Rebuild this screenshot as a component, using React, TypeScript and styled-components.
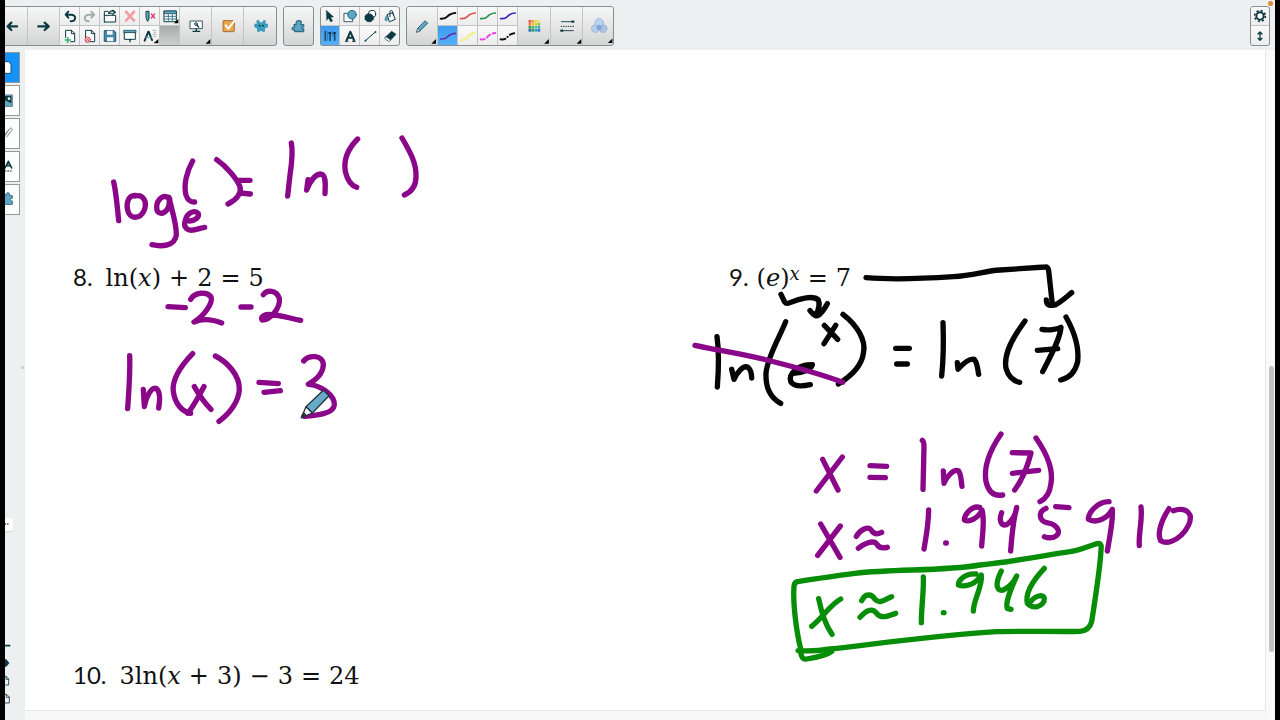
import React from "react";
import styled, { createGlobalStyle, css } from "styled-components";

const TEAL = "#0b3a42";
const BLUE = "#5fa6c4";
const PURPLE = "#8a078a";
const GREEN = "#078d07";

const GlobalStyle = createGlobalStyle`
  * { box-sizing: border-box; }
  body { margin: 0; background: #000; }
  button { appearance: none; border: 0; margin: 0; padding: 0; background: none; font: inherit; color: inherit; }
`;

const Frame = styled.div`
  display: flex;
  flex-direction: column;
  min-height: 100vh;
  border: solid #000;
  border-width: 0 5px;
  background: #edf0f0;
  overflow: hidden;
`;

const Toolbar = styled.header`
  position: relative;
  display: flex;
  gap: 6px;
  height: 50px;
  padding: 6px 5px 4px 0;
  background: #edf0f0;
`;

const Group = styled.div<{ $cut?: boolean; $end?: boolean }>`
  position: relative;
  display: flex;
  flex: none;
  flex-direction: ${(p) => (p.$end ? "column" : "row")};
  height: 40px;
  margin-left: ${(p) => (p.$end ? "auto" : "0")};
  border-radius: ${(p) => (p.$cut ? "0 3px 3px 0" : "3px")};
  background: linear-gradient(#f7f8f8, #e6e6e6 50%, #d2d3d3);
  overflow: hidden;
  &::after {
    content: "";
    position: absolute;
    inset: 0;
    border: 1px solid #8b8d8d;
    border-left-width: ${(p) => (p.$cut ? "0" : "1px")};
    border-radius: inherit;
    pointer-events: none;
  }
`;

const SmallGrid = styled.div<{ $cols: number }>`
  display: grid;
  grid-template-columns: repeat(${(p) => p.$cols}, 20px);
  grid-template-rows: 20px 20px;
`;

const small = css`
  width: 20px;
  height: 20px;
  background: linear-gradient(#fafafa, #ececec);
  box-shadow: inset -1px -1px #c3c5c5;
`;

const SmallButton = styled.button<{ $active?: boolean; $empty?: boolean }>`
  ${small}
  ${(p) => p.$active && "background: linear-gradient(#3d9bf0, #55b2fb);"}
  ${(p) => p.$empty && "background: linear-gradient(#a9abab, #cfd0d0);"}
`;

const LargeButton = styled.button<{ $w?: number }>`
  width: ${(p) => p.$w ?? 32}px;
  height: 40px;
  flex: none;
  box-shadow: inset -1px 0 #c3c5c5;
`;

const Drawing = styled.svg`
  display: block;
  width: 100%;
  height: 100%;
  fill: none;
  stroke-linecap: round;
  stroke-linejoin: round;
`;

const RecordDot = styled.i`
  position: absolute;
  top: 1px;
  right: 2px;
  width: 5px;
  height: 5px;
  border-radius: 50%;
  background: #d98a35;
`;

const Body = styled.div`
  display: flex;
  flex: 1;
`;

const Sidebar = styled.nav`
  display: flex;
  flex: none;
  flex-direction: column;
  width: 20px;
  padding-top: 2px;
`;

const Tab = styled.button<{ $active?: boolean }>`
  width: 15px;
  height: 31px;
  margin-bottom: 2px;
  background: ${(p) => (p.$active ? "#1492f8" : "#fcfdfd")};
  box-shadow: inset -1px 0 #96999a, inset 0 1px #96999a, inset 0 -1px #96999a;
`;

const Handle = styled.div`
  display: flex;
  flex: 1;
  align-items: center;
  justify-content: flex-end;
  &::after {
    content: "";
    width: 3px;
    height: 3px;
    margin-right: 1px;
    border-radius: 50%;
    background: #c6caca;
  }
`;

const MoreTab = styled.button`
  width: 8px;
  height: 13px;
  border-radius: 0 3px 3px 0;
  background: #fff;
  box-shadow: 0 1px 1px #d0d4d4;
`;

const SideTools = styled.div`
  display: flex;
  flex-direction: column;
  margin: 105px 0 12px;
`;

const SideTool = styled.button`
  width: 7px;
  height: 18px;
`;

const PaperColumn = styled.main`
  flex: 1;
  min-width: 0;
  display: flex;
  flex-direction: column;
  padding-bottom: 9px;
  background: #f8f8f8;
`;

const Paper = styled.article`
  position: relative;
  flex: 1;
  background: #fff;
  border: solid #e6e7e7;
  border-width: 0 1px 1px 0;
  padding: 207px 48px 0;
`;

const Problems = styled.div`
  display: grid;
  grid-template-columns: 656px 1fr;
  row-gap: 358px;
`;

const Problem = styled.p`
  display: flex;
  align-items: baseline;
  margin: 0;
  height: 40px;
  line-height: 40px;
  white-space: nowrap;
  color: #111;
  font-family: "DejaVu Serif", serif;
  font-size: 24px;
`;

const Number = styled.span<{ $gap: number }>`
  font-family: Lato, sans-serif;
  font-size: 24px;
  margin-right: ${(p) => p.$gap}px;
`;

const Op = styled.span`
  margin: 0 8px;
`;

const Power = styled.sup`
  align-self: flex-start;
  padding-top: 8px;
  font-size: 18px;
  line-height: 18px;
`;

const InkLayer = styled.svg`
  position: absolute;
  left: 0;
  top: 0;
  width: 1240px;
  height: 660px;
  fill: none;
  stroke-width: 16;
  stroke-linecap: round;
  stroke-linejoin: round;
  pointer-events: none;
`;

const ScrollStrip = styled.div`
  display: flex;
  flex: none;
  flex-direction: column;
  align-items: center;
  width: 9px;
  background: #f9f9f9;
  &::before { content: ""; flex: 316; }
  &::after { content: ""; flex: 68; }
`;

const Thumb = styled.div`
  flex: 286;
  width: 5px;
  margin-left: 2px;
  border-radius: 3px;
  background: #c0c1c1;
`;

type IconProps = { box: string; children?: React.ReactNode };
const Icon = ({ box, children }: IconProps) => (
  <Drawing viewBox={box} aria-hidden="true">{children}</Drawing>
);

type ToolProps = { label: string; box: string; active?: boolean; w?: number; children?: React.ReactNode };
const Small = ({ label, box, active, children }: ToolProps) => (
  <SmallButton aria-label={label} $active={active}><Icon box={box}>{children}</Icon></SmallButton>
);
const Large = ({ label, box, w, children }: ToolProps) => (
  <LargeButton aria-label={label} $w={w}><Icon box={box}>{children}</Icon></LargeButton>
);

const Puzzle = () => (
  <path
    d="M882 74 H889 C884 60 905 57 905 67 L902 74 H912 V81 C904 79 903 88 912 87 V95 H884 V90 C874 92 873 80 884 82 Z"
    fill={BLUE} stroke="#2f6f88" strokeWidth="4"
  />
);

const ink = { strokeWidth: 6 };

const MainTools = () => (
  <Group $cut>
    <Large label="Previous page" box="15 18 69 120" w={23}>
      <path d="M51 79 H25 M34 68 L23 79 L34 90" stroke={TEAL} strokeWidth="7" />
    </Large>
    <Large label="Next page" box="84 18 96 120">
      <path d="M115 79 H143 M134 68 L146 79 L134 90" stroke={TEAL} strokeWidth="7" />
    </Large>
    <SmallGrid $cols={6}>
      <Small label="Undo" box="180 18 60 60">
        <path d="M205 35 L197 44 L205 53 M199 44 H212 C232 44 228 64 212 64" stroke={TEAL} strokeWidth="6" />
      </Small>
      <Small label="Redo" box="240 18 60 60">
        <path d="M274 35 L283 44 L274 53 M281 44 H268 C248 44 252 64 266 64" stroke="#a3adac" strokeWidth="6" />
      </Small>
      <Small label="Open" box="300 18 60 60">
        <path d="M313 66 V34 H324 L328 40 H336 M313 66 H347 V46 H313" stroke={TEAL} strokeWidth="3" fill="#fff" />
        <path d="M326 40 C332 30 338 32 344 36 M338 31 L346 37 L338 43" stroke={TEAL} strokeWidth="4" />
      </Small>
      <Small label="Delete" box="360 18 60 60">
        <path d="M376 33 L404 64 M404 33 L376 64" stroke="#f0a0a8" strokeWidth="8" strokeLinecap="butt" />
      </Small>
      <Small label="Clear ink" box="420 18 60 60">
        <path d="M439 34 H447 V56 L443 64 L439 56 Z" fill={BLUE} stroke={TEAL} strokeWidth="3" />
        <path d="M454 42 L464 54 M464 42 L454 54" stroke="#dc4468" strokeWidth="4" />
      </Small>
      <Small label="Table" box="480 18 60 60">
        <path d="M493 33 H529 V65 H493 Z" fill="#fff" stroke={TEAL} strokeWidth="3" />
        <path d="M493 33 H529 V41 H493 Z" fill={BLUE} stroke={TEAL} strokeWidth="2" />
        <path d="M493 49 H529 M493 57 H529 M505 41 V65 M517 41 V65" stroke="#3d7d90" strokeWidth="3" />
        <path d="M535 57 V70 H522 Z" fill="#000" />
      </Small>
      <Small label="Add page" box="180 78 60 60">
        <path d="M198 91 H215 L224 100 V125 H198 Z M214 91 V101 H224" fill="#fff" stroke={TEAL} strokeWidth="3" />
        <circle cx="203" cy="120" r="9" fill="#eafaf0" />
        <path d="M196 120 H211 M203 113 V127" stroke="#35b070" strokeWidth="5" />
      </Small>
      <Small label="Delete page" box="240 78 60 60">
        <path d="M258 91 H275 L284 100 V125 H258 Z M274 91 V101 H284" fill="#fff" stroke={TEAL} strokeWidth="3" />
        <circle cx="263" cy="119" r="8" fill="#fbdde0" stroke="#d84458" strokeWidth="3" />
        <path d="M260 116 L266 122 M266 116 L260 122" stroke="#d84458" strokeWidth="3" />
      </Small>
      <Small label="Save" box="300 78 60 60">
        <path d="M314 92 H342 L347 97 V124 H314 Z" fill="#3f88a8" stroke="#1e5068" strokeWidth="3" />
        <path d="M321 92 H338 V104 H321 Z M321 124 V112 H340 V124 Z" fill="#eef6f8" />
      </Small>
      <Small label="Screen shade" box="360 78 60 60">
        <path d="M374 97 H406 V118 H374 Z" fill="#fff" stroke={TEAL} strokeWidth="3" />
        <path d="M372 91 H408 V98 H372 Z" fill={BLUE} stroke={TEAL} strokeWidth="2" />
        <path d="M390 118 V125" stroke={TEAL} strokeWidth="4" />
      </Small>
      <Small label="Measurement tools" box="420 78 60 60">
        <path d="M445 95 L434 122 M446 95 L456 120" stroke={TEAL} strokeWidth="6" />
        <path d="M438 112 H454" stroke={BLUE} strokeWidth="3" />
        <path d="M459 91 H467 M462 97 H467 M459 103 H467 M462 109 H467" stroke="#899" strokeWidth="2" />
        <path d="M475 117 V130 H461 Z" fill="#000" />
      </Small>
      <SmallButton aria-label="Empty slot" $empty />
    </SmallGrid>
    <Large label="View screens" box="540 18 96 120">
      <path d="M571 63 H607 V86 H571 Z" fill="#fff" stroke="#3b5960" strokeWidth="3" />
      <circle cx="588" cy="72" r="4" stroke={TEAL} strokeWidth="3" />
      <path d="M591 76 L596 81 M589 87 V93 M579 94 H599" stroke={TEAL} strokeWidth="4" />
      <path d="M631 117 V131 H617 Z" fill="#000" />
    </Large>
    <Large label="Response tools" box="636 18 96 120">
      <rect x="669" y="62" width="34" height="33" rx="3" fill="#eda64a" stroke="#a07033" strokeWidth="3" />
      <path d="M677 76 L685 86 L703 63" stroke="#fff" strokeWidth="6" />
    </Large>
    <Large label="Activity monsters" box="732 18 96 120" w={33}>
      <path
        d="M769 63 L774 61 L778 68 H786 L790 61 L795 63 L793 72 L801 72 V81 L792 85 V94 H785 L782 89 L778 94 H771 V85 L763 81 V72 L771 72 Z"
        fill="#39a2c4" stroke="#2b86a8" strokeWidth="2"
      />
      <path d="M777 77 h1 M787 77 h1" stroke={TEAL} strokeWidth="5" />
    </Large>
  </Group>
);

const PuzzleTools = () => (
  <Group>
    <Large label="Add-ons" box="848 18 96 120" w={31}><Puzzle /></Large>
  </Group>
);

const DrawTools = () => (
  <Group>
    <SmallGrid $cols={4}>
      <Small label="Select" box="28 18 60 60">
        <path d="M47 31 L69 51 L60 52 L66 63 L60 66 L54 55 L48 61 Z" fill={TEAL} stroke={TEAL} strokeWidth="1" />
      </Small>
      <Small label="Shapes" box="88 18 60 60">
        <path d="M101 40 H126 V65 H101 Z" fill="#fff" stroke="#36616e" strokeWidth="3" />
        <circle cx="124" cy="44" r="13" fill={BLUE} stroke="#2b6c88" strokeWidth="3" />
      </Small>
      <Small label="Regular polygons" box="148 18 60 60">
        <circle cx="184" cy="42" r="11" fill="#fff" stroke={TEAL} strokeWidth="3" />
        <path d="M169 42 H181 L188 49 V58 L181 65 H170 L163 58 V49 Z" fill={TEAL} stroke={TEAL} strokeWidth="2" />
      </Small>
      <Small label="Fill" box="208 18 60 60">
        <path d="M231 43 L246 38 L254 58 L237 65 Z" fill="#fff" stroke={TEAL} strokeWidth="3" />
        <path d="M238 50 V35 C238 30 245 30 246 36 L248 45" stroke={TEAL} strokeWidth="3" />
        <path d="M228 47 C221 55 222 62 227 63 C232 61 230 54 228 47" fill={BLUE} stroke="#2b6c88" strokeWidth="2" />
      </Small>
      <Small label="Pens" box="28 78 60 60" active>
        <path d="M44 95 V121 M58 101 V121 M72 101 V121" stroke="#134b73" strokeWidth="5" />
        <path d="M51 95 V121 M65 94 V108" stroke="#245f8a" strokeWidth="2" />
        <path d="M56 99 H59 M70 99 H73" stroke="#0a3050" strokeWidth="6" />
      </Small>
      <Small label="Text" box="88 78 60 60">
        <path d="M107 123 L119 95 L131 123 M111 113 H127" stroke={TEAL} strokeWidth="6" strokeLinecap="butt" />
        <path d="M103 124 H113 M124 124 H135" stroke={TEAL} strokeWidth="3" strokeLinecap="butt" />
      </Small>
      <Small label="Line" box="148 78 60 60">
        <path d="M164 122 L194 96" stroke={TEAL} strokeWidth="3" />
        <path d="M164 122 h1 M194 96 h1" stroke={TEAL} strokeWidth="5" />
      </Small>
      <Small label="Eraser" box="208 78 60 60">
        <path d="M226 110 L243 94 L256 103 L240 120 Z" fill={TEAL} stroke={TEAL} strokeWidth="2" />
        <path d="M226 110 L240 120 L235 125 L223 116 Z" fill="#fff" stroke={TEAL} strokeWidth="2" />
      </Small>
    </SmallGrid>
  </Group>
);

const PenTools = () => (
  <Group>
    <Large label="Pen" box="286 18 96 120">
      <path d="M344 63 L351 70 L328 92 L318 96 L321 86 Z" fill={BLUE} stroke="#2c6076" strokeWidth="3" />
      <path d="M318 96 L321 86 L328 92 Z" fill="#fff" stroke="#2c4a56" strokeWidth="2" />
      <path d="M376 117 V131 H362 Z" fill="#000" />
    </Large>
    <SmallGrid $cols={4}>
      <Small label="Black pen" box="382 18 60 60"><path d="M390 56 C418 58 402 42 434 39" stroke="#111" {...ink} /></Small>
      <Small label="Red pen" box="442 18 60 60"><path d="M450 56 C478 58 462 42 494 39" stroke="#e04a4a" {...ink} strokeWidth="5" /></Small>
      <Small label="Green pen" box="502 18 60 60"><path d="M510 56 C538 58 522 42 554 39" stroke="#27924a" {...ink} strokeWidth="5" /></Small>
      <Small label="Blue pen" box="562 18 60 60"><path d="M570 56 C598 58 582 42 614 39" stroke="#3a20c0" {...ink} strokeWidth="5" /></Small>
      <Small label="Purple pen" box="382 78 60 60" active><path d="M390 117 C418 119 402 103 434 100" stroke="#6330a8" {...ink} strokeWidth="5" /></Small>
      <Small label="Yellow highlighter" box="442 78 60 60"><path d="M452 121 C476 121 464 103 492 98" stroke="#f0f08c" {...ink} strokeWidth="7" /></Small>
      <Small label="Magenta dashed pen" box="502 78 60 60"><path d="M510 118 C538 120 522 104 554 99" stroke="#ec3fe4" {...ink} strokeDasharray="12 9" /></Small>
      <Small label="Black dashed pen" box="562 78 60 60"><path d="M570 118 C598 120 582 104 614 99" stroke="#111" {...ink} strokeDasharray="14 9 1 9" /></Small>
    </SmallGrid>
    <Large label="Colour" box="622 18 96 120" w={33}>
      {[
        ["#e2574c", "#f0a03c", "#f6d24a", "#f3e36a"],
        ["#ee8a3a", "#f3c440", "#c6d84a", "#8ccb50"],
        ["#3d9a58", "#4fb860", "#56c0a0", "#45a8d0"],
        ["#3868b0", "#2a9a78", "#38a8c0", "#3070c0"],
      ].map((row, y) =>
        row.map((c, x) => <rect key={`${x}-${y}`} x={652 + x * 9} y={60 + y * 9} width="8" height="8" fill={c} />)
      )}
      <path d="M713 117 V131 H699 Z" fill="#000" />
    </Large>
    <Large label="Line style" box="718 18 96 120">
      <path d="M749 65 H778 M756 92 H785" stroke="#2c4a52" strokeWidth="3" />
      <path d="M749 79 H787" stroke="#2c4a52" strokeWidth="4" strokeDasharray="1 6" />
      <path d="M782 65 h3 M749 92 h3" stroke={TEAL} strokeWidth="7" />
      <path d="M809 117 V131 H795 Z" fill="#000" />
    </Large>
    <Large label="Transparency" box="814 18 96 120" w={31}>
      <g stroke="#8fa6c8" strokeWidth="2">
        <circle cx="852" cy="86" r="12" fill="#b9cdea" />
        <circle cx="876" cy="86" r="12" fill="#a9c2e6" />
        <circle cx="864" cy="68" r="13" fill="#bcd4f2" />
      </g>
      <circle cx="864" cy="82" r="8" fill="#7da4dc" />
      <path d="M905 117 V131 H891 Z" fill="#000" />
    </Large>
  </Group>
);

const SettingsTools = () => (
  <Group $end>
    <Small label="Settings" box="149 18 60 60">
      <circle cx="179" cy="48" r="11" fill="#fff" stroke={TEAL} strokeWidth="6" />
      <circle cx="179" cy="48" r="16" stroke={TEAL} strokeWidth="5" strokeDasharray="6 6.56" strokeLinecap="butt" />
    </Small>
    <Small label="Move toolbar" box="149 78 60 60">
      <path d="M179 98 V119 M173 102 L179 96 L185 102 M173 115 L179 121 L185 115" stroke={TEAL} strokeWidth="4" />
    </Small>
  </Group>
);

const SideTabs = () => (
  <Sidebar aria-label="Side panels">
    <Tab aria-label="Page sorter" $active>
      <Icon box="15 21 45 93"><path d="M8 50 H26 L33 58 V85 H8 Z" fill="#fff" stroke="#164e72" strokeWidth="3" /></Icon>
    </Tab>
    <Tab aria-label="Gallery">
      <Icon box="15 120 45 93">
        <path d="M5 150 H37 V184 H5 Z" fill={BLUE} stroke="#678" strokeWidth="3" />
        <path d="M5 153 H34 V175 L15 166 Z" fill={TEAL} />
        <circle cx="27" cy="161" r="4" fill="#fff" />
      </Icon>
    </Tab>
    <Tab aria-label="Attachments">
      <Icon box="15 219 45 93"><path d="M12 277 L28 252 C34 245 39 252 34 258 L20 276 M16 266 L27 254" stroke="#7c8587" strokeWidth="3" /></Icon>
    </Tab>
    <Tab aria-label="Text properties">
      <Icon box="15 318 45 93">
        <path d="M15 369 L25 349 L35 369 M19 362 H31" stroke={TEAL} strokeWidth="5" />
        <path d="M15 378 H38" stroke={TEAL} strokeWidth="3" strokeDasharray="3 5" />
      </Icon>
    </Tab>
    <Tab aria-label="Add-ons panel">
      <Icon box="15 417 45 93">
        <path d="M10 452 H18 C14 441 33 440 28 452 H37 V460 C29 458 29 469 37 468 V478 H10 Z" fill={BLUE} stroke="#2f6f88" strokeWidth="3" />
      </Icon>
    </Tab>
    <Handle />
    <MoreTab aria-label="More">
      <Icon box="15 54 24 39"><path d="M16 72 h1 M23 72 h1" stroke="#444" strokeWidth="4" /></Icon>
    </MoreTab>
    <SideTools>
      <SideTool aria-label="Add"><Icon box="15 408 21 54"><path d="M12 437 H29" stroke={TEAL} strokeWidth="5" /></Icon></SideTool>
      <SideTool aria-label="Next"><Icon box="15 464 21 54"><path d="M14 480 H19 L28 491 L19 502 H14 Z" fill={TEAL} /></Icon></SideTool>
      <SideTool aria-label="New page"><Icon box="15 518 21 54"><path d="M10 531 H19 L26 539 V557 H16 M18 531 V540 H26" stroke="#39585e" strokeWidth="3" /></Icon></SideTool>
      <SideTool aria-label="Copy page"><Icon box="15 572 21 54"><path d="M10 585 H20 L28 593 V611 H16 M19 585 V594 H28" stroke="#39585e" strokeWidth="3" /></Icon></SideTool>
    </SideTools>
  </Sidebar>
);

const Ink = () => (
  <InkLayer viewBox="0 0 1240 660" role="img" aria-label="Handwritten working for problems 8 and 9">
    {/* log e ( ) = ln ( ) */}
    <svg x="35" y="70" width="380" height="180" viewBox="0 0 1140 540" overflow="visible" stroke={PURPLE}>
      <path d="M161 186 C168 215 172 260 176 302" />
      <path d="M226 226 C205 225 198 250 203 270 C208 298 240 300 253 270 C262 245 250 222 226 228" />
      <path d="M329 237 C310 218 290 240 290 262 C290 285 310 284 322 268 C330 255 328 240 327 232 C335 270 350 310 349 345 C345 378 305 381 276 374" />
      <path d="M398 123 C380 155 370 195 378 225 C383 240 392 247 404 246" />
      <path d="M470 119 C500 140 530 175 540 200 C545 220 530 240 504 252 M538 181 H570 M541 219 L571 222" />
      <path d="M388 303 C405 302 418 292 415 281 C405 268 382 278 376 300 C368 325 385 333 400 330 C415 328 425 323 434 322" />
      <path d="M694 69 C700 100 695 130 690 165 L683 228" />
      <path d="M744 179 L740 210 C750 185 765 162 783 162 C799 165 796 195 795 221" />
      <path d="M893 57 C865 85 850 120 856 155 C862 180 875 197 890 202" />
      <path d="M1026 54 C1050 95 1070 130 1068 170 C1068 200 1055 215 1033 225" />
    </svg>
    {/* subtracting 2, then ln(x) = 3 */}
    <svg x="35" y="200" width="320" height="180" viewBox="0 0 960 540" overflow="visible" stroke={PURPLE}>
      <path d="M324 170 L376 173 M543 171 H573" />
      <path d="M392 148 C405 125 440 125 453 140 C460 160 430 200 402 216 C420 208 450 205 485 219" />
      <path d="M610 134 C620 118 650 120 658 145 C662 175 630 210 606 210 C600 200 615 190 640 195 C670 197 690 205 722 211" />
      <path d="M209 317 C211 370 206 430 203 476" />
      <path d="M250 418 L253 470 C258 440 275 408 290 416 C300 425 300 450 296 474" />
      <path d="M398 311 C365 345 335 385 340 425 C345 460 365 485 392 490" />
      <path d="M403 410 C420 440 440 465 453 478 M432 410 C415 440 400 470 383 490" />
      <path d="M466 318 C500 335 540 375 538 420 C535 455 510 490 477 514" />
      <path d="M597 397 L655 401 M612 427 L661 422" />
      <path d="M731 333 C745 315 790 312 790 345 C788 375 765 390 745 403 C780 405 825 435 823 465 C820 492 770 496 732 499" />
      <g stroke="#26343f" strokeWidth="4">
        <path d="M790 421 L807 437 L757 489 L738 470 Z" fill="#68abc8" />
        <path d="M738 470 L757 489 L724 503 Z" fill="#f4f8fa" />
        <path d="M731 488 L738 497 L724 503 Z" fill="#26343f" />
      </g>
    </svg>
    {/* taking ln of both sides */}
    <svg x="655" y="200" width="420" height="170" viewBox="0 0 1260 510" overflow="visible" stroke="#050505">
      <path d="M558 83 C640 90 760 84 820 80 C880 76 920 62 960 60 L1095 51 Q1104 50 1106 62 L1117 163" />
      <path d="M1099 150 C1100 168 1110 168 1125 165 C1145 155 1160 140 1175 128" />
      <path d="M303 133 L314 156 Q319 163 330 158 C360 145 400 135 415 150 C422 165 415 180 408 195 M390 182 C400 195 410 202 418 194 C430 183 436 172 442 161" />
      <path d="M111 260 C118 310 116 360 112 411" />
      <path d="M155 358 L162 388 C170 370 190 342 205 353 C215 362 214 372 215 384" />
      <path d="M317 215 C300 260 262 320 258 370 C256 420 275 445 302 460" />
      <path d="M340 370 C370 368 395 358 397 344 C380 342 345 350 332 378 C325 405 350 413 391 404" />
      <path d="M433 226 L473 268 M467 226 L432 281" />
      <path d="M489 193 C530 225 560 270 550 310 C545 350 510 380 475 402" />
      <path d="M647 295 H688 M650 342 H682" />
      <path d="M789 218 C791 270 790 330 785 378" />
      <path d="M832 338 L834 358 C850 340 870 325 883 328 C893 340 892 355 896 373" />
      <path d="M1035 213 C1000 260 970 310 978 355 C985 380 1000 393 1019 397" />
      <path d="M1086 238 C1105 242 1130 238 1143 232 C1140 270 1110 320 1088 365 M1072 301 L1133 296" />
      <path d="M1158 201 C1180 240 1198 290 1193 335 C1185 370 1165 385 1142 390" />
      <path d="M45 286 C120 302 190 312 260 330 C340 350 420 370 488 397" stroke={PURPLE} />
    </svg>
    {/* solution and rounded answer */}
    <svg x="755" y="370" width="430" height="250" viewBox="0 0 1290 750" overflow="visible" stroke={PURPLE}>
      <path d="M128 118 L174 210 M187 111 L109 213" />
      <path d="M270 137 L320 139 M270 172 L316 173" />
      <path d="M427 61 Q432 65 432 80 L429 208" />
      <path d="M490 153 L492 190 C500 170 520 147 535 152 C545 165 543 185 546 199" />
      <path d="M663 42 C630 90 610 140 618 185 C625 215 640 230 668 225" />
      <path d="M697 98 L753 99 C745 130 730 175 704 210 M697 160 L776 151" />
      <path d="M768 54 C800 100 820 150 813 190 C810 215 800 235 780 245" />
      <path d="M122 312 L180 412 M181 318 L113 406" />
      <path d="M229 349 C240 330 265 315 275 332 C283 345 295 342 305 337 M235 385 C250 372 280 358 290 372 C300 388 315 384 322 382" />
      <path d="M446 270 C445 320 438 350 432 387 M497 369 h2" />
      <path d="M599 262 C575 255 553 285 553 300 C567 308 595 295 606 270 C615 300 607 345 605 378" />
      <path d="M665 278 C655 305 665 318 680 314 C700 300 708 280 710 262 C700 300 695 350 692 393" />
      <path d="M798 265 C775 275 775 300 800 308 C840 315 845 345 820 352 Q805 355 793 350 M827 260 L867 263" />
      <path d="M987 245 C950 245 925 280 925 298 C945 310 980 300 997 268 C1000 300 990 345 982 393" />
      <path d="M1083 261 C1088 300 1075 340 1078 377" />
      <path d="M1167 266 C1145 300 1130 340 1142 362 C1180 385 1240 320 1230 285 C1223 268 1200 264 1180 272" />
      <g stroke={GREEN}>
        <path d="M62 686 C50 640 38 550 42 500 Q42 484 58 484 C110 475 180 466 225 460 C350 445 480 455 600 435 C700 425 800 405 870 395 C910 388 940 372 955 370 Q966 370 963 390 C960 450 945 540 935 605 Q928 632 900 634 C820 636 740 632 650 635 C480 645 300 670 150 687 C120 692 90 694 54 692" />
        <path d="M62 696 Q64 720 80 717 C110 712 140 706 155 694" />
        <path d="M116 536 C125 580 140 620 156 643 M182 537 C150 555 130 590 95 619" />
        <path d="M245 542 C255 520 275 520 285 538 C300 555 320 535 335 530 M240 592 C255 575 275 560 290 580 C305 600 330 585 347 580" />
        <path d="M430 471 C432 510 424 560 424 608 M490 578 h2" />
        <path d="M588 462 C555 460 535 480 535 495 C560 503 590 490 604 465 C608 500 580 540 580 573" />
        <path d="M664 453 C640 500 655 515 670 510 C690 500 700 490 710 468 C695 500 675 550 682 565 L693 568" />
        <path d="M793 445 C760 480 735 520 742 550 C755 570 795 560 793 535 C790 522 765 525 750 548" />
      </g>
    </svg>
  </InkLayer>
);

const Worksheet = () => (
  <PaperColumn>
    <Paper>
      <Problems>
        <Problem>
          <Number $gap={13}>8.</Number>
          <span>ln(<i>x</i>)</span><Op>+</Op>2<Op>=</Op>5
        </Problem>
        <Problem>
          <Number $gap={8}>9.</Number>
          <span>(<i>e</i>)</span><Power><i>x</i></Power><Op>=</Op>7
        </Problem>
        <Problem>
          <Number $gap={13}>10.</Number>
          <span>3ln(<i>x</i></span><Op>+</Op><span>3)</span><Op>−</Op>3<Op>=</Op>24
        </Problem>
      </Problems>
      <Ink />
    </Paper>
  </PaperColumn>
);

export default function App() {
  return (
    <>
      <GlobalStyle />
      <Frame>
        <Toolbar>
          <MainTools />
          <PuzzleTools />
          <DrawTools />
          <PenTools />
          <SettingsTools />
          <RecordDot />
        </Toolbar>
        <Body>
          <SideTabs />
          <Worksheet />
          <ScrollStrip><Thumb /></ScrollStrip>
        </Body>
      </Frame>
    </>
  );
}
